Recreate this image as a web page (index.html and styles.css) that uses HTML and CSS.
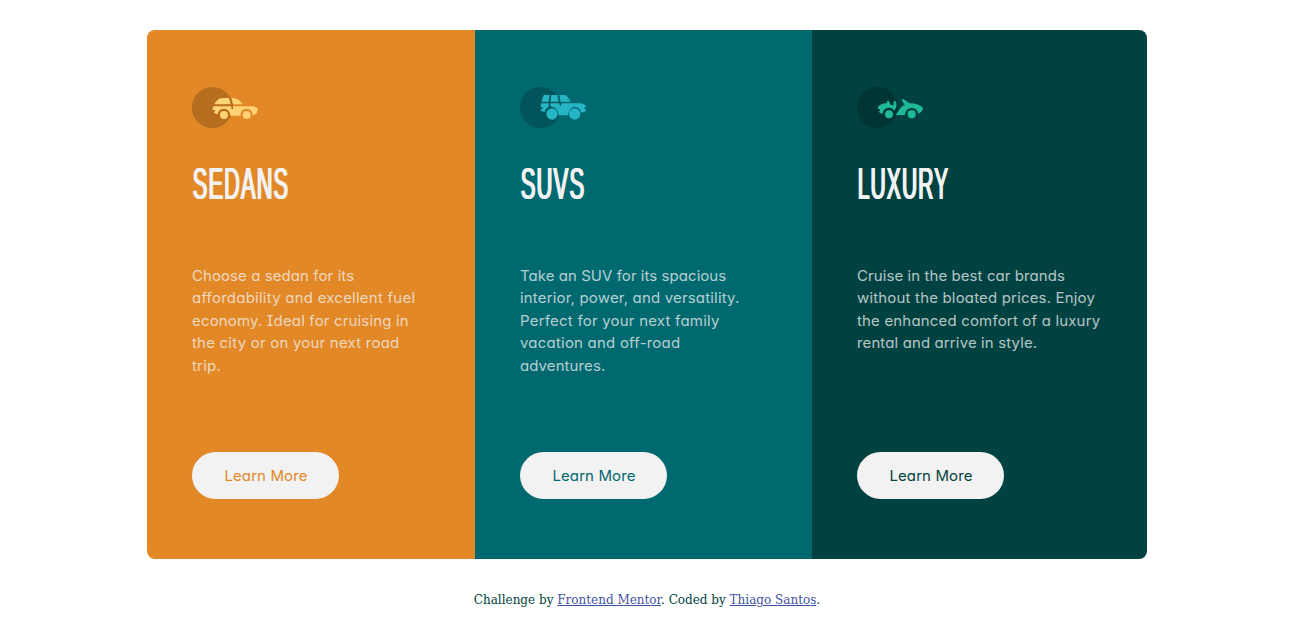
FILE: index.html
```
<!DOCTYPE html>
<html lang="en">
<head>
<meta charset="utf-8">
<title>3-column preview card</title>
<link rel="stylesheet" href="styles.css">
</head>
<body>
<main class="cards">
  <section class="card sedans">
    <svg class="icon" viewBox="15 21 204 123" aria-hidden="true">
      <circle class="disc" cx="76" cy="82.500" r="61.500"/>
      <g class="car">
        <path d="M82 73Q89 59 100 55Q113 53 126 54L131 73ZM134 54Q149 54 156 60L167 73H137Z"/>
        <path d="M80 79H195Q211 81 213 86V91H210V97Q208 103 197 106Q196 87 179 86Q161 87 160 107H130Q129 87 111 86Q94 86 92 103Q82 101 79 95H84V90H77V84Z"/>
        <circle cx="111" cy="105" r="12"/><circle cx="179" cy="105" r="12"/>
      </g>
      <path class="pillar" d="M129 54Q136 68 136 87"/>
    </svg>
    <h2 class="title"><span>SEDANS</span></h2>
    <p class="copy"><span>Choose a sedan for its</span> <span>affordability and excellent fuel</span> <span>economy. Ideal for cruising in</span> <span>the city or on your next road</span> <span>trip.</span></p>
    <a class="button" href="#"><span>Learn More</span></a>
  </section>
  <section class="card suvs">
    <svg class="icon" viewBox="15 21 204 123" aria-hidden="true">
      <circle class="disc" cx="76" cy="82.500" r="61.500"/>
      <g class="car">
        <path d="M79 65L86 45H104L101 65ZM109 45H127L131 65H106ZM133 45H148Q153 45 156 49L167 65H137Z"/>
        <path d="M78 70H101V80Q92 84 89 96L77 93V88H82V82H77ZM106 70H132L136 79L141 70H197Q209 72 212 77V82H208V88H213V94L199 98Q195 82 179 80Q163 82 159 106H131Q130 84 106 79Z"/>
        <circle cx="111" cy="102" r="17"/><circle cx="179" cy="102" r="17"/>
      </g>
    </svg>
    <h2 class="title"><span>SUVS</span></h2>
    <p class="copy"><span>Take an SUV for its spacious</span> <span>interior, power, and versatility.</span> <span>Perfect for your next family</span> <span>vacation and off-road</span> <span>adventures.</span></p>
    <a class="button" href="#"><span>Learn More</span></a>
  </section>
  <section class="card luxury">
    <svg class="icon" viewBox="15 21 204 123" aria-hidden="true">
      <circle class="disc" cx="76" cy="82.500" r="61.500"/>
      <g class="car">
        <path d="M79 79Q91 69 106 69L104 63L110 62L116 75L126 74L124 65L130 62Q136 73 133 81L127 92Q122 83 111 83Q94 84 91 102Q82 99 79 94H84V88L77 86Z"/>
        <path d="M131 105L146 83Q151 77 158 76L149 60L154 57L173 70Q202 70 213 84Q213 94 199 101Q196 84 179 84Q161 85 158 105Z"/>
        <circle cx="111" cy="103" r="12"/><circle cx="179" cy="103" r="12"/>
      </g>
    </svg>
    <h2 class="title"><span>LUXURY</span></h2>
    <p class="copy"><span>Cruise in the best car brands</span> <span>without the bloated prices. Enjoy</span> <span>the enhanced comfort of a luxury</span> <span>rental and arrive in style.</span></p>
    <a class="button" href="#"><span>Learn More</span></a>
  </section>
</main>
<footer class="attribution">Challenge by <a href="#">Frontend Mentor</a>. Coded by <a href="#">Thiago Santos</a>.</footer>
</body>
</html>
```
FILE: styles.css
```
* { box-sizing: border-box; }
body { margin: 0; padding-top: 30px; background: #fff; font-family: Inter, "Open Sans", sans-serif; }
.cards { display: grid; grid-template-columns: 328px 337px 335px; width: 1000px; height: 529px; margin: 0 auto; border-radius: 8px; overflow: hidden; }
.card { display: flex; flex-direction: column; align-items: flex-start; padding: 57px 0 60px 45px; background: var(--main); }
.sedans { --main: #e38826; --disc: #b66d1e; --car: #ffd373; --narrow: .484; }
.suvs { --main: #006970; --disc: #00545a; --car: #26b5c4; --narrow: .488; }
.luxury { --main: #004241; --disc: #003534; --car: #1eba97; --narrow: .467; }
.icon { display: block; width: 68px; height: 41px; flex: none; }
.disc { fill: var(--disc); }
.car { fill: var(--car); }
.pillar { fill: none; stroke: var(--disc); stroke-width: 5; }
.title { margin: 27px 0 0; height: 57px; font: 400 45px/57px "Liberation Sans", sans-serif; color: #f2f2f2; }
.title span { display: inline-block; transform: scaleX(var(--narrow)); transform-origin: left; white-space: nowrap; letter-spacing: 2.4px; text-shadow: 1.5px 0 #f2f2f2, 3px 0 #f2f2f2; }
.copy { margin: 52.5px 0 0; height: 112px; font-size: 14.4px; line-height: 22.5px; letter-spacing: .22px; font-feature-settings: "cv11", "cv08"; color: #f2f2f2bf; }
.copy span { display: block; width: max-content; white-space: nowrap; transform: scaleX(1.04); transform-origin: left; }
.sedans .copy span:nth-child(1) { letter-spacing: .09px; }
.sedans .copy span:nth-child(2) { letter-spacing: .24px; }
.sedans .copy span:nth-child(3) { letter-spacing: .17px; }
.suvs .copy span:nth-child(1) { letter-spacing: .06px; }
.suvs .copy span:nth-child(2) { letter-spacing: .18px; }
.suvs .copy span:nth-child(5) { letter-spacing: .1px; }
.luxury .copy span:nth-child(1) { letter-spacing: .09px; }
.luxury .copy span:nth-child(2), .luxury .copy span:nth-child(3) { letter-spacing: .18px; }
.luxury .copy span:nth-child(4) { letter-spacing: .13px; }
.button { display: grid; place-items: center; width: 147px; height: 47px; margin-top: auto; border-radius: 24px; background: #f2f2f2; color: var(--main); font-size: 14.4px; font-weight: 400; letter-spacing: .12px; font-feature-settings: "cv11"; text-decoration: none; }
.button span { transform: scaleX(1.04); }
.attribution { margin-top: 34px; font: 12px/14px "DejaVu Serif", serif; text-align: center; color: #004241; }
.attribution a { color: #3e52a3; }
```
